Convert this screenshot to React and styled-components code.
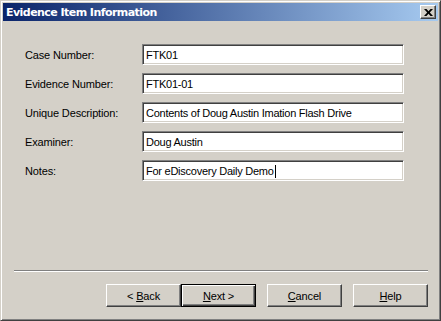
import React from "react";
import styled, { createGlobalStyle } from "styled-components";

const GlobalStyle = createGlobalStyle`
  html, body {
    margin: 0;
    padding: 0;
    background: #d4d0c8;
  }
  * {
    box-sizing: border-box;
  }
`;

const Window = styled.div`
  width: 441px;
  height: 321px;
  display: flex;
  flex-direction: column;
  background: #d4d0c8;
  border: 1px solid;
  border-color: #d4d0c8 #404040 #404040 #d4d0c8;
  box-shadow: inset 1px 1px #ffffff, inset -1px -1px #808080;
  padding: 2px;
  font-family: "Liberation Sans", Arial, sans-serif;
  font-size: 11px;
  color: #000;
`;

const TitleBar = styled.div`
  height: 18px;
  display: flex;
  align-items: center;
  justify-content: space-between;
  padding: 0 2px 0 3px;
  background: linear-gradient(to right, #0a246a, #a6caf0);
`;

const Title = styled.span`
  color: #fff;
  font-family: "DejaVu Sans", Tahoma, sans-serif;
  font-weight: bold;
  font-size: 11px;
  letter-spacing: -0.55px;
`;

const CloseButton = styled.div`
  width: 16px;
  height: 14px;
  display: flex;
  align-items: center;
  justify-content: center;
  background: #d4d0c8;
  border: 1px solid;
  border-color: #fff #404040 #404040 #fff;
  box-shadow: inset -1px -1px #808080;
`;

const Body = styled.div`
  flex: 1;
  display: flex;
  flex-direction: column;
  padding: 23px 10px 0 11px;
`;

const Form = styled.div`
  display: grid;
  grid-template-columns: 117px 262px;
  grid-auto-rows: 21px;
  row-gap: 8px;
  padding-left: 11px;
`;

const Label = styled.label`
  display: flex;
  align-items: center;
  padding-top: 1px;
  letter-spacing: -0.15px;
`;

const Field = styled.div`
  display: flex;
  align-items: center;
  background: #fff;
  border: 1px solid;
  border-color: #808080 #fff #fff #808080;
  box-shadow: inset 1px 1px #404040, inset -1px -1px #d4d0c8;
  padding: 1px 2px 0 3px;
  white-space: nowrap;
  overflow: hidden;
  letter-spacing: -0.25px;
`;

const Caret = styled.span`
  display: inline-block;
  width: 1px;
  height: 13px;
  background: #000;
  margin-left: 1px;
`;

const Spacer = styled.div`
  flex: 1;
`;

const Separator = styled.div`
  height: 2px;
  border-top: 1px solid #808080;
  border-bottom: 1px solid #fff;
  margin-bottom: 12px;
`;

const ButtonRow = styled.div`
  display: flex;
  justify-content: flex-end;
  height: 23px;
  margin-bottom: 11px;
`;

const Button = styled.div`
  width: 75px;
  height: 23px;
  display: flex;
  align-items: center;
  justify-content: center;
  margin-left: ${(p) => (p.$gap ? "11px" : "0")};
  background: #d4d0c8;
  letter-spacing: -0.15px;
  border: 1px solid;
  border-color: ${(p) =>
    p.$default ? "#000" : "#fff #404040 #404040 #fff"};
  box-shadow: ${(p) =>
    p.$default
      ? "inset 1px 1px #fff, inset -1px -1px #404040, inset -2px -2px #808080"
      : "inset -1px -1px #808080"};
`;

const Key = styled.span`
  text-decoration: underline;
`;

const fields = [
  ["Case Number:", "FTK01"],
  ["Evidence Number:", "FTK01-01"],
  ["Unique Description:", "Contents of Doug Austin Imation Flash Drive"],
  ["Examiner:", "Doug Austin"],
  ["Notes:", "For eDiscovery Daily Demo"],
];

const App = () => {
  return (
    <>
      <GlobalStyle />
      <Window>
        <TitleBar>
          <Title>Evidence Item Information</Title>
          <CloseButton>
            <svg width="9" height="7" viewBox="0 0 9 7">
              <path
                d="M0 0h2.5l2 2.2 2-2.2H9L5.8 3.5 9 7H6.5l-2-2.2-2 2.2H0l3.2-3.5z"
                fill="#000"
              />
            </svg>
          </CloseButton>
        </TitleBar>
        <Body>
          <Form>
            {fields.map(([label, value], i) => (
              <React.Fragment key={label}>
                <Label>{label}</Label>
                <Field>
                  {value}
                  {i === fields.length - 1 && <Caret />}
                </Field>
              </React.Fragment>
            ))}
          </Form>
          <Spacer />
          <Separator />
          <ButtonRow>
            <Button>
              &lt;&nbsp;<Key>B</Key>ack
            </Button>
            <Button $default>
              <Key>N</Key>ext &gt;
            </Button>
            <Button $gap>
              <Key>C</Key>ancel
            </Button>
            <Button $gap>
              <Key>H</Key>elp
            </Button>
          </ButtonRow>
        </Body>
      </Window>
    </>
  );
};

export default App;
